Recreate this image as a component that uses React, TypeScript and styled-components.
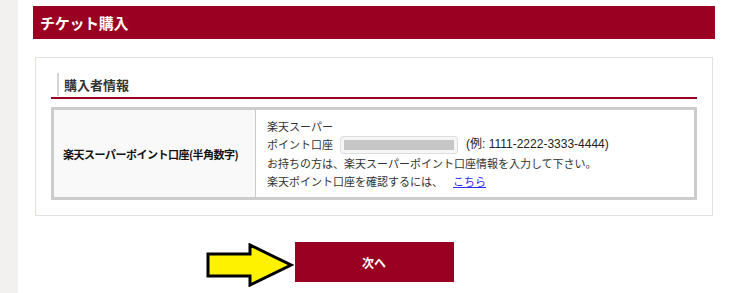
import React from 'react';
import styled, { createGlobalStyle } from 'styled-components';

const GlobalStyle = createGlobalStyle`
  html, body {
    margin: 0;
    padding: 0;
    background: #fff;
  }
  body {
    font-family: "Noto Sans CJK JP", "Noto Sans", sans-serif;
    color: #333;
  }
`;

// page frame: grey side strip + content column
const Page = styled.div`
  display: grid;
  grid-template-columns: 18px 1fr;
  min-height: 100vh;
`;

const SideStrip = styled.div`
  background: #f2f1ef;
`;

const Main = styled.main`
  padding: 6px 14px 0 15px;
`;

const PageTitle = styled.h2`
  margin: 0;
  height: 33px;
  display: flex;
  align-items: center;
  padding-left: 7px;
  background: #990021;
  color: #fff;
  font-size: 15px;
  font-weight: bold;
  letter-spacing: -0.3px;
`;

const Panel = styled.section`
  margin: 18px 2px 0;
  border: 1px solid #e4e1dc;
  padding: 15px 15px 15px 15px;
`;

const SectionHead = styled.div`
  border-bottom: 2px solid #990021;
  padding: 0 0 1px 6px;
`;

const SectionTitle = styled.h3`
  margin: 0;
  border-left: 2px solid #d4d4d4;
  padding-left: 5px;
  height: 23px;
  display: flex;
  align-items: center;
  font-size: 13px;
  font-weight: bold;
  color: #333;
`;

const FormTable = styled.table`
  width: 100%;
  margin-top: 8px;
  border-collapse: collapse;
  border: 3px solid #cccccc;
`;

const HeadCell = styled.th`
  width: 192px;
  background: #f9f9f9;
  border-right: 1px solid #cccccc;
  text-align: left;
  padding: 0 0 0 9px;
  font-size: 11px;
  font-weight: bold;
  letter-spacing: -0.5px;
  color: #111;
  white-space: nowrap;
`;

const BodyCell = styled.td`
  padding: 7px 11px 7px 11px;
  font-size: 11px;
  line-height: 18px;
  color: #333;
`;

const InputRow = styled.div`
  display: flex;
  align-items: flex-end;
`;

const InputLabel = styled.div`
  width: 73px;
`;

const TextBox = styled.div`
  width: 118px;
  height: 18px;
  box-sizing: border-box;
  border: 1px solid #dedede;
  border-radius: 3px;
  padding: 3px;
  background: #f6f6f6;
  margin-bottom: -1px;
`;

const TextBoxFill = styled.div`
  height: 100%;
  background: #c6c6c6;
`;

const Example = styled.span`
  margin-left: 8px;
  font-family: "Liberation Sans", "Noto Sans CJK JP", sans-serif;
  font-size: 12px;
  color: #222;
`;

const Note = styled.div`
  margin-top: 1px;
`;

const LinkText = styled.a`
  margin-left: 10px;
  color: #2d2df0;
  text-decoration: underline;
`;

const ActionRow = styled.div`
  display: flex;
  justify-content: center;
  margin-top: 26px;
`;

const ButtonWrap = styled.div`
  position: relative;
`;

const NextButton = styled.button`
  width: 159px;
  height: 40px;
  border: none;
  background: #990021;
  color: #fff;
  font-family: "Noto Sans CJK JP", sans-serif;
  font-size: 12px;
  font-weight: bold;
  cursor: pointer;
`;

// yellow pointer arrow drawn over the page
const Pointer = styled.svg`
  position: absolute;
  right: calc(100% + 1px);
  top: 1px;
`;

function App() {
  return (
    <>
      <GlobalStyle />
      <Page>
        <SideStrip />
        <Main>
          <PageTitle>チケット購入</PageTitle>
          <Panel>
            <SectionHead>
              <SectionTitle>購入者情報</SectionTitle>
            </SectionHead>
            <FormTable>
              <tbody>
                <tr>
                  <HeadCell>楽天スーパーポイント口座(半角数字)</HeadCell>
                  <BodyCell>
                    <InputRow>
                      <InputLabel>
                        楽天スーパー
                        <br />
                        ポイント口座
                      </InputLabel>
                      <TextBox>
                        <TextBoxFill />
                      </TextBox>
                      <Example>(例: 1111-2222-3333-4444)</Example>
                    </InputRow>
                    <Note>
                      お持ちの方は、楽天スーパーポイント口座情報を入力して下さい。
                      <br />
                      楽天ポイント口座を確認するには、
                      <LinkText href='#'>こちら</LinkText>
                    </Note>
                  </BodyCell>
                </tr>
              </tbody>
            </FormTable>
          </Panel>
          <ActionRow>
            <ButtonWrap>
              <Pointer width='88' height='44' viewBox='0 0 88 44'>
                <polygon
                  points='2,11 44,11 44,2 85,22 44,42 44,33 2,33'
                  fill='#fff200'
                  stroke='#000'
                  strokeWidth='3'
                  strokeLinejoin='miter'
                />
              </Pointer>
              <NextButton>次へ</NextButton>
            </ButtonWrap>
          </ActionRow>
        </Main>
      </Page>
    </>
  );
}

export default App;
